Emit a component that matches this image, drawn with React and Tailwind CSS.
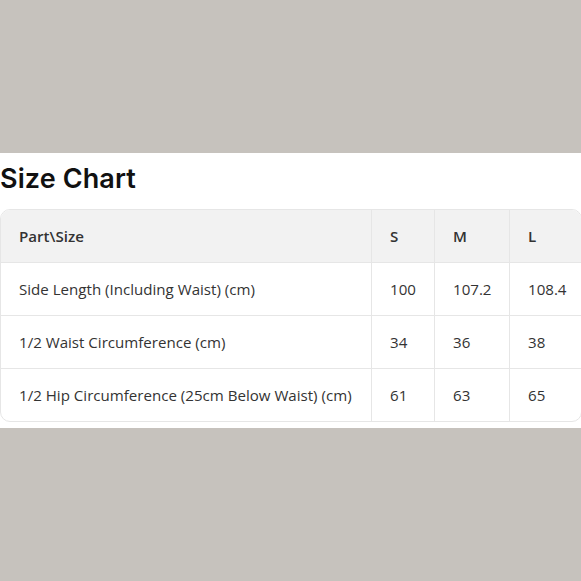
const rows = [
  ["Side Length (Including Waist) (cm)", "100", "107.2", "108.4"],
  ["1/2 Waist Circumference (cm)", "34", "36", "38"],
  ["1/2 Hip Circumference (25cm Below Waist) (cm)", "61", "63", "65"],
];

function Row({ cells, head }) {
  return (
    <div className={`grid grid-cols-[371px_63px_75px_1fr] ${head ? "h-[52px] bg-[#f2f2f2] font-semibold" : "h-[53px] border-t border-[#e6e6e6]"}`}>
      {cells.map((c, i) => (
        <div key={i} className={`flex items-center pl-[18px] ${i < 3 ? "border-r border-[#e6e6e6]" : ""}`}>
          {c}
        </div>
      ))}
    </div>
  );
}

export default function App() {
  return (
    <div className="h-[581px] w-[581px] overflow-hidden bg-[#c6c2bd]">
      <div className="mt-[153px] bg-white pb-[6px]">
        <h2 className="pt-[9px] mb-[13px] text-[27px] leading-[34px] font-semibold text-[#111] tracking-[0.1px]" style={{ fontFamily: "Inter, sans-serif" }}>
          Size Chart
        </h2>
        <div className="w-[582px] rounded-[10px] border border-[#e6e6e6] overflow-hidden text-[15.1px] text-[#333]" style={{ fontFamily: "'Open Sans', sans-serif" }}>
          <Row head cells={["Part\\Size", "S", "M", "L"]} />
          {rows.map((r, i) => <Row key={i} cells={r} />)}
        </div>
      </div>
    </div>
  );
}
